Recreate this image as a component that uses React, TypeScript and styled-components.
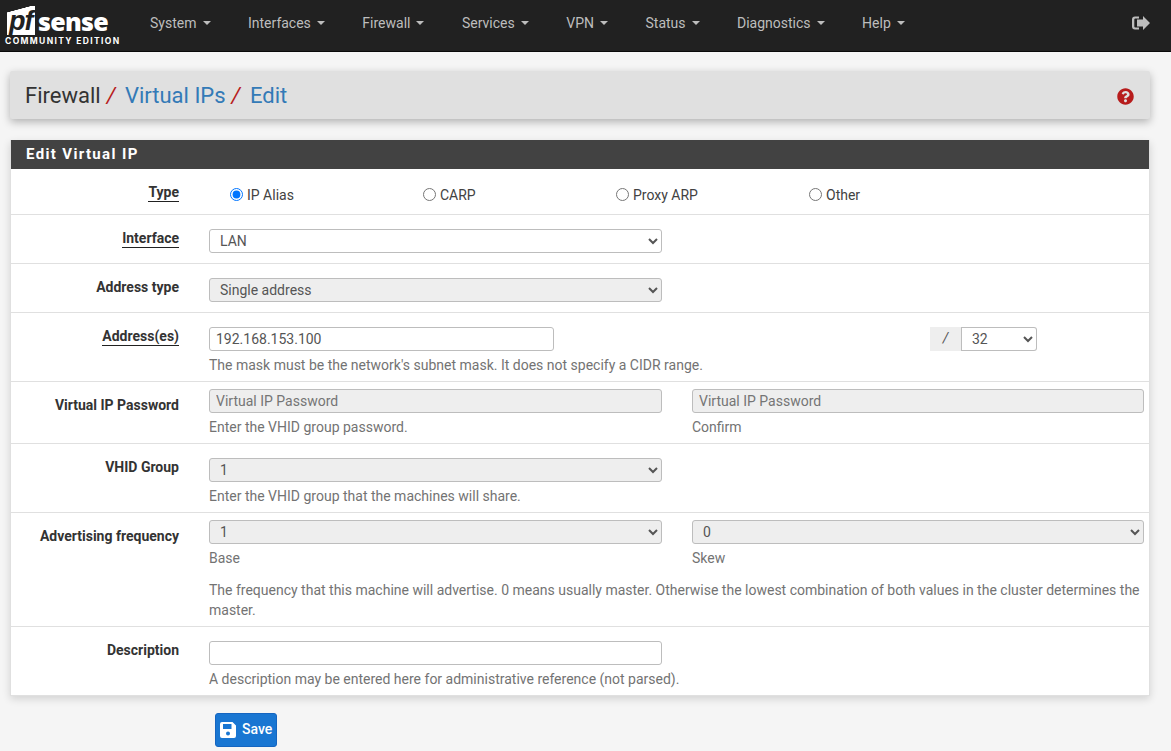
import React from "react";
import styled, { createGlobalStyle } from "styled-components";
import { FaQuestionCircle } from "react-icons/fa";

const GlobalStyle = createGlobalStyle`
  html, body {
    margin: 0;
    padding: 0;
    background: #f5f5f5;
  }
  body {
    font-family: Roboto, "Liberation Sans", sans-serif;
    font-size: 14px;
    line-height: 20px;
    color: #333;
  }
  * {
    box-sizing: border-box;
  }
`;

const Page = styled.div`
  width: 1171px;
  height: 751px;
  overflow: hidden;
`;

const Navbar = styled.nav`
  height: 52px;
  background: #212121;
  border-bottom: 1px solid #0a0a0a;
  display: flex;
  align-items: flex-start;
`;

const Brand = styled.div`
  width: 131.3px;
  height: 51px;
  flex: none;
  padding: 6px 0 0 5px;
`;

const LogoTop = styled.div`
  height: 29px;
  display: flex;
  align-items: flex-start;
  padding-left: 2px;
`;

const LogoBox = styled.span`
  width: 28px;
  height: 29px;
  flex: none;
  background: linear-gradient(165deg, #212121 0 6px, #fff 6.5px);
  color: #212121;
  font-family: "Liberation Sans", sans-serif;
  font-size: 27px;
  font-style: italic;
  font-weight: 700;
  line-height: 30px;
  letter-spacing: -1px;
  padding-left: 2px;
`;

const LogoWord = styled.span`
  color: #fff;
  font-family: "Open Sans", sans-serif;
  font-size: 25px;
  font-weight: 800;
  letter-spacing: -0.7px;
  line-height: 28px;
  height: 28px;
  margin: 1px 0 0 3px;
`;

const LogoEdition = styled.div`
  color: #fff;
  font-family: Inter, sans-serif;
  font-size: 8.5px;
  font-weight: 700;
  letter-spacing: 1.35px;
  line-height: 10px;
  margin-top: 1px;
  white-space: nowrap;
`;

const NavItems = styled.ul`
  display: flex;
  flex: 1;
  list-style: none;
  margin: 0;
  padding: 13px 0 0;
`;

const NavItem = styled.li`
  color: #bdbdbd;
  display: flex;
  align-items: center;
  padding: 0 18.75px;
  line-height: 20px;
  white-space: nowrap;
`;

const Caret = styled.span`
  width: 0;
  height: 0;
  margin-left: 6px;
  border-top: 4px solid #bdbdbd;
  border-left: 4px solid transparent;
  border-right: 4px solid transparent;
`;

const Logout = styled.svg`
  width: 18px;
  height: 14px;
  margin: 16px 21px 0 0;
  fill: #bdbdbd;
  flex: none;
`;

const Main = styled.main`
  padding: 19px 21px 0 10px;
`;

const Header = styled.header`
  height: 48px;
  background: #e0e0e0;
  border-radius: 2px;
  box-shadow: 0 3px 8px rgba(0, 0, 0, 0.28);
  display: flex;
  align-items: center;
  justify-content: space-between;
  padding: 2px 16px 0 15px;
  margin-bottom: 21px;
`;

const Crumbs = styled.h1`
  display: flex;
  margin: 0;
  font-size: 22px;
  font-weight: 400;
  line-height: 28px;
  color: #333;
`;

const CrumbLink = styled.span`
  color: #337ab7;
`;

const Slash = styled.span`
  color: #b71c1c;
  font-style: italic;
  padding: 0 9.5px 0 6px;
`;

const HelpIcon = styled(FaQuestionCircle)`
  color: #b71c1c;
  width: 17px;
  height: 17px;
`;

const Panel = styled.section`
  background: #fff;
  border: 1px solid #e0e0e0;
  border-top: 0;
  box-shadow: 0 3px 8px rgba(0, 0, 0, 0.14);
`;

const PanelTitle = styled.h2`
  height: 29px;
  margin: 0;
  padding: 0 15px;
  background: #424242;
  color: #fff;
  font-size: 15px;
  font-weight: 700;
  letter-spacing: 1.35px;
  line-height: 28px;
`;

const Row = styled.div<{ $h: number; $tight?: boolean; $last?: boolean }>`
  height: ${(p) => p.$h}px;
  display: grid;
  grid-template-columns: 168px 453px 452px;
  column-gap: 30px;
  align-content: start;
  padding: ${(p) => (p.$tight ? "7px" : "14px")} 0 0;
  border-bottom: ${(p) => (p.$last ? "0" : "1px solid #e0e0e0")};
`;

const Label = styled.div<{ $u?: boolean; $tight?: boolean }>`
  font-weight: 700;
  text-align: right;
  line-height: 18px;
  margin-top: ${(p) => (p.$tight ? "7px" : "0")};
  & > span {
    border-bottom: ${(p) => (p.$u ? "1px solid #212121" : "0")};
    padding-bottom: 1px;
  }
`;

const Radios = styled.div`
  grid-column: 2 / 4;
  display: grid;
  grid-template-columns: repeat(4, 193px);
  padding: 2px 0 0 21px;
`;

const RadioLabel = styled.label`
  display: flex;
  align-items: center;
  color: #424242;
  line-height: 20px;
  gap: 4px;
`;

const Radio = styled.input`
  width: 13px;
  height: 13px;
  margin: 0 0 2px;
  accent-color: #0075ff;
`;

const Select = styled.select<{ $off?: boolean }>`
  width: 100%;
  height: 24px;
  display: block;
  padding: 0 6px;
  font: 14px Roboto, sans-serif;
  color: #555;
  background: ${(p) => (p.$off ? "#eeeeee" : "#fff")};
  border: 1px solid #bdbdbd;
  border-radius: 3px;
`;

const Input = styled.input<{ $w?: number; $off?: boolean }>`
  width: ${(p) => (p.$w ? `${p.$w}px` : "100%")};
  height: 24px;
  display: block;
  padding: 0 6px;
  font: 14px Roboto, sans-serif;
  color: #555;
  background: ${(p) => (p.$off ? "#eeeeee" : "#fff")};
  border: 1px solid #bdbdbd;
  border-radius: 3px;
  &::placeholder {
    color: #757575;
    opacity: 1;
  }
`;

const Help = styled.div`
  color: #737373;
  line-height: 20px;
  margin-top: 4px;
  white-space: nowrap;
`;

const Wide = styled.div`
  grid-column: 2 / 4;
  color: #737373;
  line-height: 20px;
  margin-top: 12px;
  padding-right: 4px;
`;

const MaskCell = styled.div`
  display: flex;
  justify-content: flex-end;
  padding-right: 107px;
`;

const MaskAddon = styled.span`
  width: 32px;
  height: 24px;
  flex: none;
  background: #eee;
  border-right: 1px solid #bdbdbd;
  color: #555;
  font-style: italic;
  text-align: center;
  line-height: 22px;
`;

const MaskSelect = styled(Select)`
  width: 75px;
  flex: none;
  border-left: 0;
  border-radius: 0 3px 3px 0;
  padding: 0 6px;
`;

const Actions = styled.div`
  padding: 17px 0 0 205px;
`;

const SaveButton = styled.button`
  height: 34px;
  width: 62px;
  display: flex;
  align-items: center;
  gap: 6px;
  padding: 0 4px 2px;
  background: #1976d2;
  border: 1px solid #1565c0;
  border-radius: 3px;
  color: #fff;
  font: 500 14px Roboto, sans-serif;
`;

const SaveIcon = styled.svg`
  width: 16px;
  height: 16px;
  margin-top: 2px;
  flex: none;
  fill: #fff;
`;

const nav = [
  "System",
  "Interfaces",
  "Firewall",
  "Services",
  "VPN",
  "Status",
  "Diagnostics",
  "Help",
];

const App = () => {
  return (
    <Page>
      <GlobalStyle />
      <Navbar>
        <Brand>
          <LogoTop>
            <LogoBox>pf</LogoBox>
            <LogoWord>sense</LogoWord>
          </LogoTop>
          <LogoEdition>COMMUNITY EDITION</LogoEdition>
        </Brand>
        <NavItems>
          {nav.map((n) => (
            <NavItem key={n}>
              {n}
              <Caret />
            </NavItem>
          ))}
        </NavItems>
        <Logout viewBox="0 0 18 14">
          <path d="M7 .5H3a3 3 0 0 0-3 3v7a3 3 0 0 0 3 3h4v-2H3.3a1 1 0 0 1-1-1v-7a1 1 0 0 1 1-1H7z" />
          <path d="M11 0l7 7-7 7v-3.5H5v-7h6z" />
        </Logout>
      </Navbar>
      <Main>
        <Header>
          <Crumbs>
            Firewall
            <Slash>/</Slash>
            <CrumbLink>Virtual IPs</CrumbLink>
            <Slash>/</Slash>
            <CrumbLink>Edit</CrumbLink>
          </Crumbs>
          <HelpIcon />
        </Header>
        <Panel>
          <PanelTitle>Edit Virtual IP</PanelTitle>
          <Row $h={46}>
            <Label $u>
              <span>Type</span>
            </Label>
            <Radios>
              <RadioLabel>
                <Radio type="radio" name="mode" defaultChecked />
                IP Alias
              </RadioLabel>
              <RadioLabel>
                <Radio type="radio" name="mode" />
                CARP
              </RadioLabel>
              <RadioLabel>
                <Radio type="radio" name="mode" />
                Proxy ARP
              </RadioLabel>
              <RadioLabel>
                <Radio type="radio" name="mode" />
                Other
              </RadioLabel>
            </Radios>
          </Row>
          <Row $h={49}>
            <Label $u>
              <span>Interface</span>
            </Label>
            <Select>
              <option>LAN</option>
            </Select>
          </Row>
          <Row $h={49}>
            <Label>
              <span>Address type</span>
            </Label>
            <Select $off>
              <option>Single address</option>
            </Select>
          </Row>
          <Row $h={69}>
            <Label $u>
              <span>Address(es)</span>
            </Label>
            <div>
              <Input $w={345} defaultValue="192.168.153.100" />
              <Help>The mask must be the network's subnet mask. It does not specify a CIDR range.</Help>
            </div>
            <MaskCell>
              <MaskAddon>/</MaskAddon>
              <MaskSelect>
                <option>32</option>
              </MaskSelect>
            </MaskCell>
          </Row>
          <Row $h={62} $tight>
            <Label $tight>
              <span>Virtual IP Password</span>
            </Label>
            <div>
              <Input $off placeholder="Virtual IP Password" />
              <Help>Enter the VHID group password.</Help>
            </div>
            <div>
              <Input $off placeholder="Virtual IP Password" />
              <Help>Confirm</Help>
            </div>
          </Row>
          <Row $h={69}>
            <Label>
              <span>VHID Group</span>
            </Label>
            <div>
              <Select $off>
                <option>1</option>
              </Select>
              <Help>Enter the VHID group that the machines will share.</Help>
            </div>
          </Row>
          <Row $h={114} $tight>
            <Label $tight>
              <span>Advertising frequency</span>
            </Label>
            <div>
              <Select $off>
                <option>1</option>
              </Select>
              <Help>Base</Help>
            </div>
            <div>
              <Select $off>
                <option>0</option>
              </Select>
              <Help>Skew</Help>
            </div>
            <Wide>
              The frequency that this machine will advertise. 0 means usually master. Otherwise the lowest combination of both values in the cluster determines the master.
            </Wide>
          </Row>
          <Row $h={68} $last>
            <Label>
              <span>Description</span>
            </Label>
            <div>
              <Input />
              <Help>A description may be entered here for administrative reference (not parsed).</Help>
            </div>
          </Row>
        </Panel>
        <Actions>
          <SaveButton>
            <SaveIcon viewBox="0 0 16 16">
              <path
                fillRule="evenodd"
                d="M2 0h10.5L16 3.5V14a2 2 0 0 1-2 2H2a2 2 0 0 1-2-2V2a2 2 0 0 1 2-2zM3 2v5h8.5V2zM8 9.6a2 2 0 1 0 0 4 2 2 0 0 0 0-4z"
              />
            </SaveIcon>
            Save
          </SaveButton>
        </Actions>
      </Main>
    </Page>
  );
};

export default App;
